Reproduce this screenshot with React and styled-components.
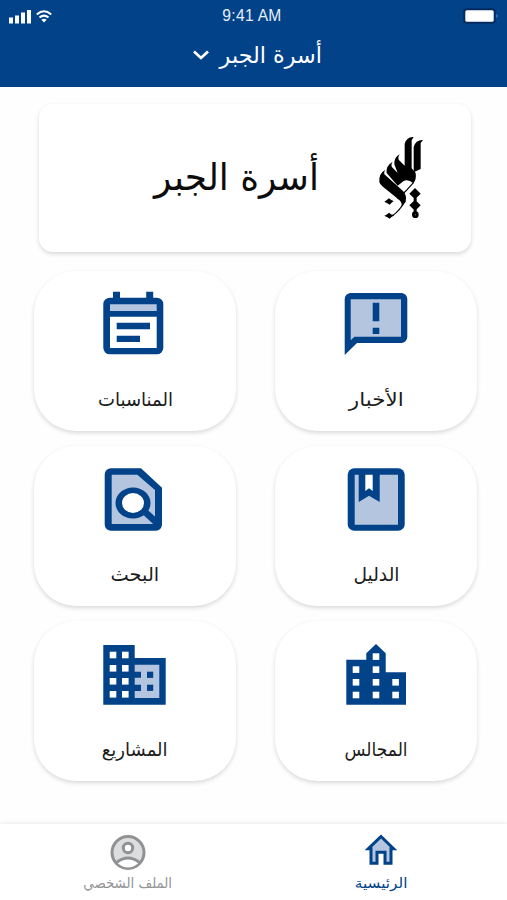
import React from "react";
import styled, { createGlobalStyle } from "styled-components";

const blue = "#014289";
const pale = "#b3c5df";

const Global = createGlobalStyle`
  * { box-sizing: border-box; }
  body { margin: 0; background: #fefefe; font-family: "DejaVu Sans", "Noto Sans", sans-serif; }
`;

const Screen = styled.div`
  width: 507px;
  height: 900px;
  display: flex;
  flex-direction: column;
  overflow: hidden;
  background: #fefefe;
`;

const Header = styled.header`
  height: 87px;
  flex: none;
  background: ${blue};
  color: #fff;
`;

const StatusBar = styled.div`
  height: 30px;
  display: grid;
  grid-template-columns: 1fr auto 1fr;
  align-items: center;
  padding: 0 8px 0 8px;
`;

const Clock = styled.time`
  font: 15.6px "Liberation Sans", Arial, sans-serif;
  letter-spacing: 0.3px;
  color: #e6eef8;
  line-height: 30px;
  padding: 1px 3px 0 0;
`;

const Battery = styled.svg`
  justify-self: end;
  display: block;
`;

const FamilyPicker = styled.button`
  width: 100%;
  height: 50px;
  padding: 0 0 0 9px;
  border: 0;
  background: none;
  color: inherit;
  display: flex;
  justify-content: center;
  align-items: center;
  gap: 9px;
`;

const Text = styled.span`
  display: block;
  white-space: nowrap;
  font-family: "DejaVu Sans", sans-serif;
  font-size: ${(p) => p.$size}px;
  line-height: 1.4;
  color: ${(p) => p.$color || "inherit"};
  transform: scaleX(${(p) => p.$stretch || 1});
  transform-origin: ${(p) => p.$origin || "center"};
`;

const Main = styled.main`
  height: 737px;
  flex: none;
  padding: 17px 30px 0 34px;
`;

const FamilyCard = styled.section`
  width: 432px;
  height: 148px;
  margin: 0 0 19px 5px;
  border-radius: 14px;
  background: #fff;
  box-shadow: 0 2px 4px rgba(0, 0, 0, 0.15);
  display: flex;
  align-items: center;
  gap: 54px;
  padding-right: 44px;
`;

const Grid = styled.div`
  display: grid;
  grid-template-columns: 202px 202px;
  grid-auto-rows: 160px;
  column-gap: 39px;
  row-gap: 15px;
`;

const Tile = styled.button`
  border: 0;
  border-radius: 42px;
  padding: 16px 0 0;
  background: #fff;
  box-shadow: 0 2px 4px rgba(0, 0, 0, 0.15);
  display: flex;
  flex-direction: column;
  align-items: center;
  gap: 27px;
  color: #1c1c1c;
`;

const NavBar = styled.nav`
  height: 76px;
  flex: none;
  display: grid;
  grid-template-columns: 255px 252px;
  background: #fff;
  box-shadow: 0 -1px 4px rgba(0, 0, 0, 0.08);
`;

const NavItem = styled.button`
  border: 0;
  background: none;
  padding: 8px 0 0;
  display: flex;
  flex-direction: column;
  align-items: center;
  gap: 2px;
  color: ${(p) => (p.$active ? blue : "#929496")};
`;

const Icon = ({ children }) => (
  <svg width="72" height="72" viewBox="0 0 72 72" fill={blue}>{children}</svg>
);

const Squares = ({ points, size = 6.6, fill = "#fff" }) =>
  points.map(([x, y]) => <rect key={`${x}-${y}`} x={x} y={y} width={size} height={size} fill={fill} />);

const CalendarIcon = () => (
  <Icon>
    <path d="M14 4.7h7v8h-7zM47.2 4.7h7v8h-7z" />
    <rect x="4.3" y="10.7" width="60" height="56.6" rx="6.5" />
    <path d="M11 17.3h46.7V24H11z" fill={pale} />
    <path d="M11 29.7h46.7V61H11z" fill="#fff" />
    <path d="M17.7 35.7H51v6.6H17.7zM17.7 48.7H41V55H17.7z" />
  </Icon>
);

const NewsIcon = () => (
  <Icon>
    <path d="M4.7 68V12a6 6 0 0 1 6-6h50.6a6 6 0 0 1 6 6v38a6 6 0 0 1-6 6H17z" />
    <path d="M10.7 12.3H61v37.4H14.4l-3.7 3.6z" fill={pale} />
    <path d="M32.7 15.7h6.6v18.6h-6.6zM32.7 40.7h6.6V47h-6.6z" />
  </Icon>
);

const SearchIcon = () => (
  <Icon>
    <path d="M12 6.3h30l21 19.4v36.8a6.2 6.2 0 0 1-6.2 6.2H12a6.2 6.2 0 0 1-6.3-6.2v-50A6.2 6.2 0 0 1 12 6.3z" />
    <path d="M12.7 12.7h25.6L56 28v34H12.7z" fill={pale} />
    <path d="M44 48l14 13" stroke={blue} strokeWidth="6.5" />
    <ellipse cx="34" cy="41" rx="17.5" ry="15.5" />
    <ellipse cx="34" cy="41" rx="11" ry="10" fill="#fff" />
  </Icon>
);

const BookIcon = () => (
  <Icon>
    <rect x="7.7" y="6.3" width="57" height="62.4" rx="6.5" />
    <path d="M14.7 12.7H58v50H14.7z" fill={pale} />
    <path d="M18.7 12h21v28L29 33.7 18.7 40z" />
    <path d="M25.3 12.7h7.4V29L29 26.3 25.3 29z" fill="#fff" />
  </Icon>
);

const ProjectsIcon = () => (
  <Icon>
    <path d="M4.3 8h31.4v13h31v46.7H4.3z" />
    <path d="M35.7 27.7h24.6V61H35.7v-7H42v-6.3h-6.3v-7H42v-6h-6.3z" fill={pale} />
    <Squares points={[[48, 34.7], [48, 47.7]]} size={6.2} fill={blue} />
    <Squares points={[[10.7, 14.7], [23, 14.7], [10.7, 28], [23, 28], [10.7, 41], [23, 41], [10.7, 54], [23, 54]]} />
  </Icon>
);

const CouncilsIcon = () => (
  <Icon>
    <path d="M6.3 22.7h20v-6.4L36 7l9.7 9.3v19H66v32.4H6.3z" />
    <Squares
      points={[[32.7, 16.3], [12.7, 29.3], [32.7, 29.3], [12.7, 42], [32.7, 42], [52.3, 42], [12.7, 54.7], [32.7, 54.7], [52.3, 54.7]]}
    />
  </Icon>
);

const Emblem = () => (
  <svg width="54" height="90" viewBox="100 40 162 270">
    <path d="M222 52Q202 50 195 72V138L177 120Q174 112 180 104Q163 112 164 134L174 160L156 141Q153 133 159 126Q138 138 141 160L174 198L192 184Q206 178 221 191Q231 180 228 160L216 146V62Z" />
    <path d="M250 61Q228 60 222 82V158L243 148V70Z" />
    <path d="M137 150Q116 162 119 188Q122 195 128 200L178 240Q188 248 186 262L198 246Q202 226 190 214L134 164Q132 156 137 150Z" />
    <path d="M222 188Q200 214 174 238M196 244Q180 274 158 288" fill="none" stroke="#000" strokeWidth="3.5" />
    <path d="M134 246Q140 243 148 236Q154 243 162 244Q154 250 150 255Q144 250 134 246zM134 288Q140 286 148 279Q154 286 164 287Q154 292 150 297Q144 292 134 288z" />
    <path d="M226 205l17 17-17 17-17-17zM226 240l17 17-17 17-17-17zM222 232h9v50h-9z" />
    <circle cx="227" cy="285" r="10" />
    <circle cx="227" cy="285" r="1.800" fill="#777" />
  </svg>
);

const tiles = [
  { label: "المناسبات", stretch: 0.95, icon: CalendarIcon },
  { label: "الأخبار", stretch: 1.13, icon: NewsIcon },
  { label: "البحث", stretch: 1.02, icon: SearchIcon },
  { label: "الدليل", stretch: 0.98, icon: BookIcon },
  { label: "المشاريع", stretch: 0.95, icon: ProjectsIcon },
  { label: "المجالس", stretch: 0.9, icon: CouncilsIcon },
];

export default function App() {
  return (
    <Screen>
      <Global />
      <Header>
        <StatusBar>
          <svg width="46" height="18" viewBox="0 0 46 18" fill="#fff">
            <path d="M1 10.500h4v6H1zM7 8.500h4v8H7zM13 5.500h4v11h-4zM19 3h4v13.500h-4z" />
            <g fill="none" stroke="#fff" strokeWidth="2">
              <path d="M28.800 7.400q7.200-6.400 14.400 0M31.500 10.600q4.500-4 9 0" />
            </g>
            <path d="M33.400 12.800q2.600-2 5.200 0L36 15.600z" />
          </svg>
          <Clock>9:41 AM</Clock>
          <Battery width="36" height="16" viewBox="0 0 36 16">
            <rect x="1.300" y="1.300" width="30.400" height="13.400" rx="2.500" fill="#fff" stroke="#032b60" strokeWidth="2" />
            <path d="M33.500 6q2 2 0 4z" fill="#7595c0" />
          </Battery>
        </StatusBar>
        <FamilyPicker>
          <svg width="16" height="10" viewBox="0 0 16 10" fill="none" stroke="#fff" strokeWidth="2.700">
            <path d="M1 1.400l7 6.600 7-6.600" />
          </svg>
          <Text dir="rtl" $size={23} $stretch={0.97}>أسرة الجبر</Text>
        </FamilyPicker>
      </Header>
      <Main>
        <FamilyCard dir="rtl">
          <Emblem />
          <Text $size={37} $color="#0c0c0c" $stretch={0.97} $origin="right">أسرة الجبر</Text>
        </FamilyCard>
        <Grid dir="rtl">
          {[tiles[1], tiles[0], tiles[3], tiles[2], tiles[5], tiles[4]].map(({ label, stretch, icon: TileIcon }) => (
            <Tile key={label}>
              <TileIcon />
              <Text $size={19} $stretch={stretch}>{label}</Text>
            </Tile>
          ))}
        </Grid>
      </Main>
      <NavBar>
        <NavItem>
          <svg width="40" height="40" viewBox="0 0 40 40" fill="#dcdddf" stroke="#8f9193" strokeWidth="3">
            <circle cx="20" cy="20.500" r="16" />
            <path d="M9.500 31q10.500-8.500 21 0-10.500 9-21 0z" fill="#fff" stroke="none" />
            <path d="M8.500 30.500q11.500-9 23 0" fill="none" />
            <circle cx="20" cy="16" r="4.700" fill="#fff" />
          </svg>
          <Text dir="rtl" $size={14} $stretch={0.95}>الملف الشخصي</Text>
        </NavItem>
        <NavItem $active>
          <svg width="40" height="40" viewBox="0 0 40 40" fill={pale} stroke={blue} strokeWidth="3">
            <path d="M7.400 16.700L20 4.500l12.600 12.200H30v14.500h-6v-11h-8v11h-6V16.700z" />
          </svg>
          <Text dir="rtl" $size={14} $stretch={1.09}>الرئيسية</Text>
        </NavItem>
      </NavBar>
    </Screen>
  );
}
